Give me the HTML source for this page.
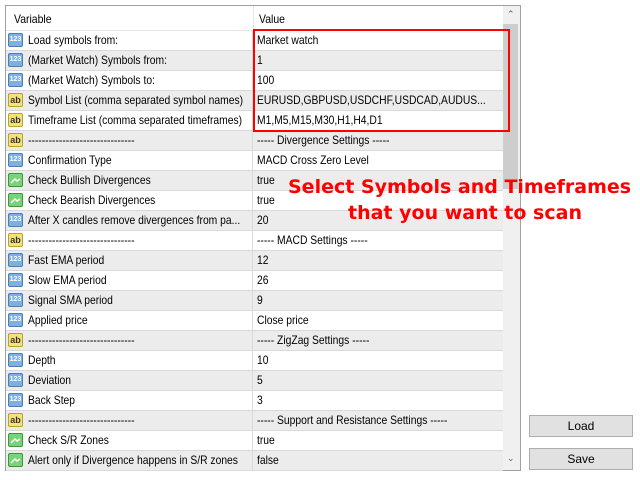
<!DOCTYPE html>
<html><head><style>
body{margin:0;width:640px;height:480px;background:#fff;font-family:"Liberation Sans",sans-serif;font-size:12px;color:#000;position:relative;overflow:hidden}
.box{position:absolute;left:5px;top:5px;width:514px;height:464px;border:1px solid #a0a0a0;background:#fff}
.hdr{position:absolute;left:0;top:0;width:497px;height:24px;border-bottom:1px solid #e5e5e5}
.hdr span{position:absolute;top:6px;display:inline-block;transform:scaleX(0.87);transform-origin:left}
.row{position:absolute;left:0;width:497px;height:19px;border-bottom:1px solid #d9d9d9}
.g{background:#ececec}
.row .n,.row .v{position:absolute;top:2px;white-space:nowrap;display:inline-block;transform:scaleX(0.86);transform-origin:left}
.row .n{left:22px}
.row .v{left:251px}
.row .sep{position:absolute;left:246px;top:0;width:1px;height:20px;background:#d9d9d9}
.ic{position:absolute;left:2px;top:2px;border-radius:2px;font-size:7px;font-weight:bold;text-align:center}
.b{background:#7fb0e0;border:1px solid #4a7fb8;color:#fff;width:13px;height:12px;line-height:12px}
.y{background:#f4e27a;border:1px solid #b9a030;color:#333;width:13px;height:12px;line-height:12px;font-size:9px}
.gr{background:#7ad27a;border:1px solid #3a9a3a;width:13px;height:12px}
.sb{position:absolute;left:497px;top:0;width:17px;height:464px;background:#f0f0f0}
.th{position:absolute;left:0;top:18px;width:15px;height:165px;background:#cdcdcd}
.red{position:absolute;left:253px;top:29px;width:253px;height:99px;border:2px solid #f00}
.txt{position:absolute;color:#f00;font-family:"DejaVu Sans",sans-serif;font-weight:bold;font-size:19px;white-space:nowrap}
.btn{position:absolute;left:529px;width:102px;height:20px;background:#e1e1e1;border:1px solid #adadad;text-align:center;line-height:20px}
</style></head><body>
<div class="box">
<div class="hdr"><span style="left:8px">Variable</span><span style="left:253px">Value</span><div style="position:absolute;left:247px;top:0;width:1px;height:24px;background:#e5e5e5"></div></div>
<div id="rows"></div>
<div class="sb"><div style="position:absolute;top:3px;left:4px;font-size:9px;color:#606060">&#8963;</div><div class="th"></div><div style="position:absolute;top:447px;left:4px;font-size:9px;color:#606060">&#8964;</div></div>
</div>
<div class="red"></div>
<div class="txt" style="left:288px;top:176px">Select Symbols and Timeframes</div>
<div class="txt" style="left:348px;top:202px">that you want to scan</div>
<div class="btn" style="top:415px">Load</div>
<div class="btn" style="top:448px">Save</div>
<script>
var D="-------------------------------";
var R=[["b","Load symbols from:","Market watch"],["b","(Market Watch) Symbols from:","1"],["b","(Market Watch) Symbols to:","100"],["y","Symbol List (comma separated symbol names)","EURUSD,GBPUSD,USDCHF,USDCAD,AUDUS..."],["y","Timeframe List (comma separated timeframes)","M1,M5,M15,M30,H1,H4,D1"],["y",D,"----- Divergence Settings -----"],["b","Confirmation Type","MACD Cross Zero Level"],["gr","Check Bullish Divergences","true"],["gr","Check Bearish Divergences","true"],["b","After X candles remove divergences from pa...","20"],["y",D,"----- MACD Settings -----"],["b","Fast EMA period","12"],["b","Slow EMA period","26"],["b","Signal SMA period","9"],["b","Applied price","Close price"],["y",D,"----- ZigZag Settings -----"],["b","Depth","10"],["b","Deviation","5"],["b","Back Step","3"],["y",D,"----- Support and Resistance Settings -----"],["gr","Check S/R Zones","true"],["gr","Alert only if Divergence happens in S/R zones","false"]];
var h="";R.forEach(function(r,i){var t=r[0]=="b"?"123":r[0]=="y"?"ab":'<svg width="13" height="12"><path d="M2 9 L6 5 L8 7 L11 5" stroke="#fff" stroke-width="1.5" fill="none"/></svg>';
h+='<div class="row'+(i%2?' g':'')+'" style="top:'+(25+i*20)+'px"><div class="ic '+r[0]+'">'+t+'</div><span class="n">'+r[1]+'</span><div class="sep"></div><span class="v">'+r[2]+'</span></div>';});
document.getElementById("rows").innerHTML=h;
</script>
</body></html>
